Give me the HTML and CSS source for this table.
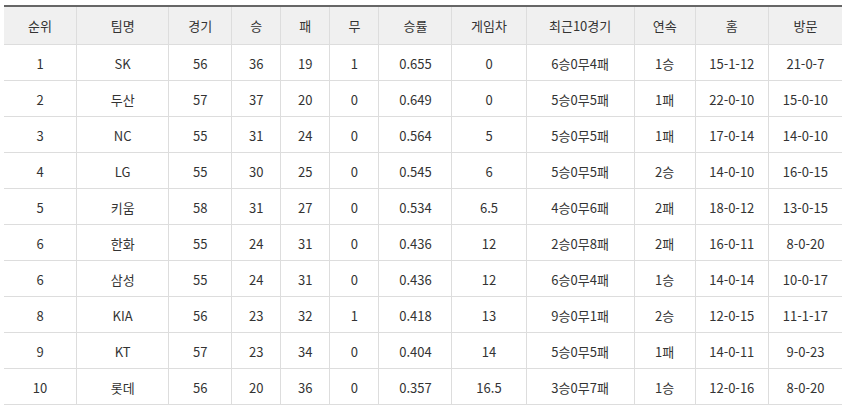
FILE: index.html
```html
<!DOCTYPE html>
<html lang="ko">
<head>
<meta charset="utf-8">
<link rel="stylesheet" href="styles.css">
</head>
<body>
<table class="rank">
<thead>
<tr><th>순위</th><th>팀명</th><th>경기</th><th>승</th><th>패</th><th>무</th><th>승률</th><th>게임차</th><th>최근10경기</th><th>연속</th><th>홈</th><th>방문</th></tr>
</thead>
<tbody>
<tr><td>1</td><td>SK</td><td>56</td><td>36</td><td>19</td><td>1</td><td>0.655</td><td>0</td><td>6승0무4패</td><td>1승</td><td>15-1-12</td><td>21-0-7</td></tr>
<tr><td>2</td><td>두산</td><td>57</td><td>37</td><td>20</td><td>0</td><td>0.649</td><td>0</td><td>5승0무5패</td><td>1패</td><td>22-0-10</td><td>15-0-10</td></tr>
<tr><td>3</td><td>NC</td><td>55</td><td>31</td><td>24</td><td>0</td><td>0.564</td><td>5</td><td>5승0무5패</td><td>1패</td><td>17-0-14</td><td>14-0-10</td></tr>
<tr><td>4</td><td>LG</td><td>55</td><td>30</td><td>25</td><td>0</td><td>0.545</td><td>6</td><td>5승0무5패</td><td>2승</td><td>14-0-10</td><td>16-0-15</td></tr>
<tr><td>5</td><td>키움</td><td>58</td><td>31</td><td>27</td><td>0</td><td>0.534</td><td>6.5</td><td>4승0무6패</td><td>2패</td><td>18-0-12</td><td>13-0-15</td></tr>
<tr><td>6</td><td>한화</td><td>55</td><td>24</td><td>31</td><td>0</td><td>0.436</td><td>12</td><td>2승0무8패</td><td>2패</td><td>16-0-11</td><td>8-0-20</td></tr>
<tr><td>6</td><td>삼성</td><td>55</td><td>24</td><td>31</td><td>0</td><td>0.436</td><td>12</td><td>6승0무4패</td><td>1승</td><td>14-0-14</td><td>10-0-17</td></tr>
<tr><td>8</td><td>KIA</td><td>56</td><td>23</td><td>32</td><td>1</td><td>0.418</td><td>13</td><td>9승0무1패</td><td>2승</td><td>12-0-15</td><td>11-1-17</td></tr>
<tr><td>9</td><td>KT</td><td>57</td><td>23</td><td>34</td><td>0</td><td>0.404</td><td>14</td><td>5승0무5패</td><td>1패</td><td>14-0-11</td><td>9-0-23</td></tr>
<tr><td>10</td><td>롯데</td><td>56</td><td>20</td><td>36</td><td>0</td><td>0.357</td><td>16.5</td><td>3승0무7패</td><td>1승</td><td>12-0-16</td><td>8-0-20</td></tr>
</tbody>
</table>
</body>
</html>
```
FILE: styles.css
```css
html, body {
  margin: 0;
  background: #fff;
}
body {
  padding: 5px 5px 0 4px;
  font-family: "Noto Sans CJK KR", "Noto Sans", sans-serif;
  font-size: 13px;
  color: #333;
}
.rank {
  border-collapse: collapse;
  table-layout: fixed;
  width: 838px;
  border-top: 2px solid #666;
}
.rank th, .rank td {
  text-align: center;
  padding: 0;
  border: 1px solid #ddd;
  white-space: nowrap;
}
.rank tr > :first-child { border-left: none; }
.rank tr > :last-child { border-right: none; }
.rank th {
  height: 37px;
  background: #f0f0f0;
  font-weight: normal;
  border-top: none;
}
.rank td {
  height: 33px;
  padding-top: 2px;
}
.rank th:nth-child(1) { width: 72px; }
.rank th:nth-child(2) { width: 91px; }
.rank th:nth-child(3) { width: 62px; }
.rank th:nth-child(4) { width: 48px; }
.rank th:nth-child(5) { width: 48px; }
.rank th:nth-child(6) { width: 48px; }
.rank th:nth-child(7) { width: 72px; }
.rank th:nth-child(8) { width: 73px; }
.rank th:nth-child(9) { width: 107px; }
.rank th:nth-child(10) { width: 60px; }
.rank th:nth-child(11) { width: 72px; }
.rank th:nth-child(12) { width: 73px; }
```
